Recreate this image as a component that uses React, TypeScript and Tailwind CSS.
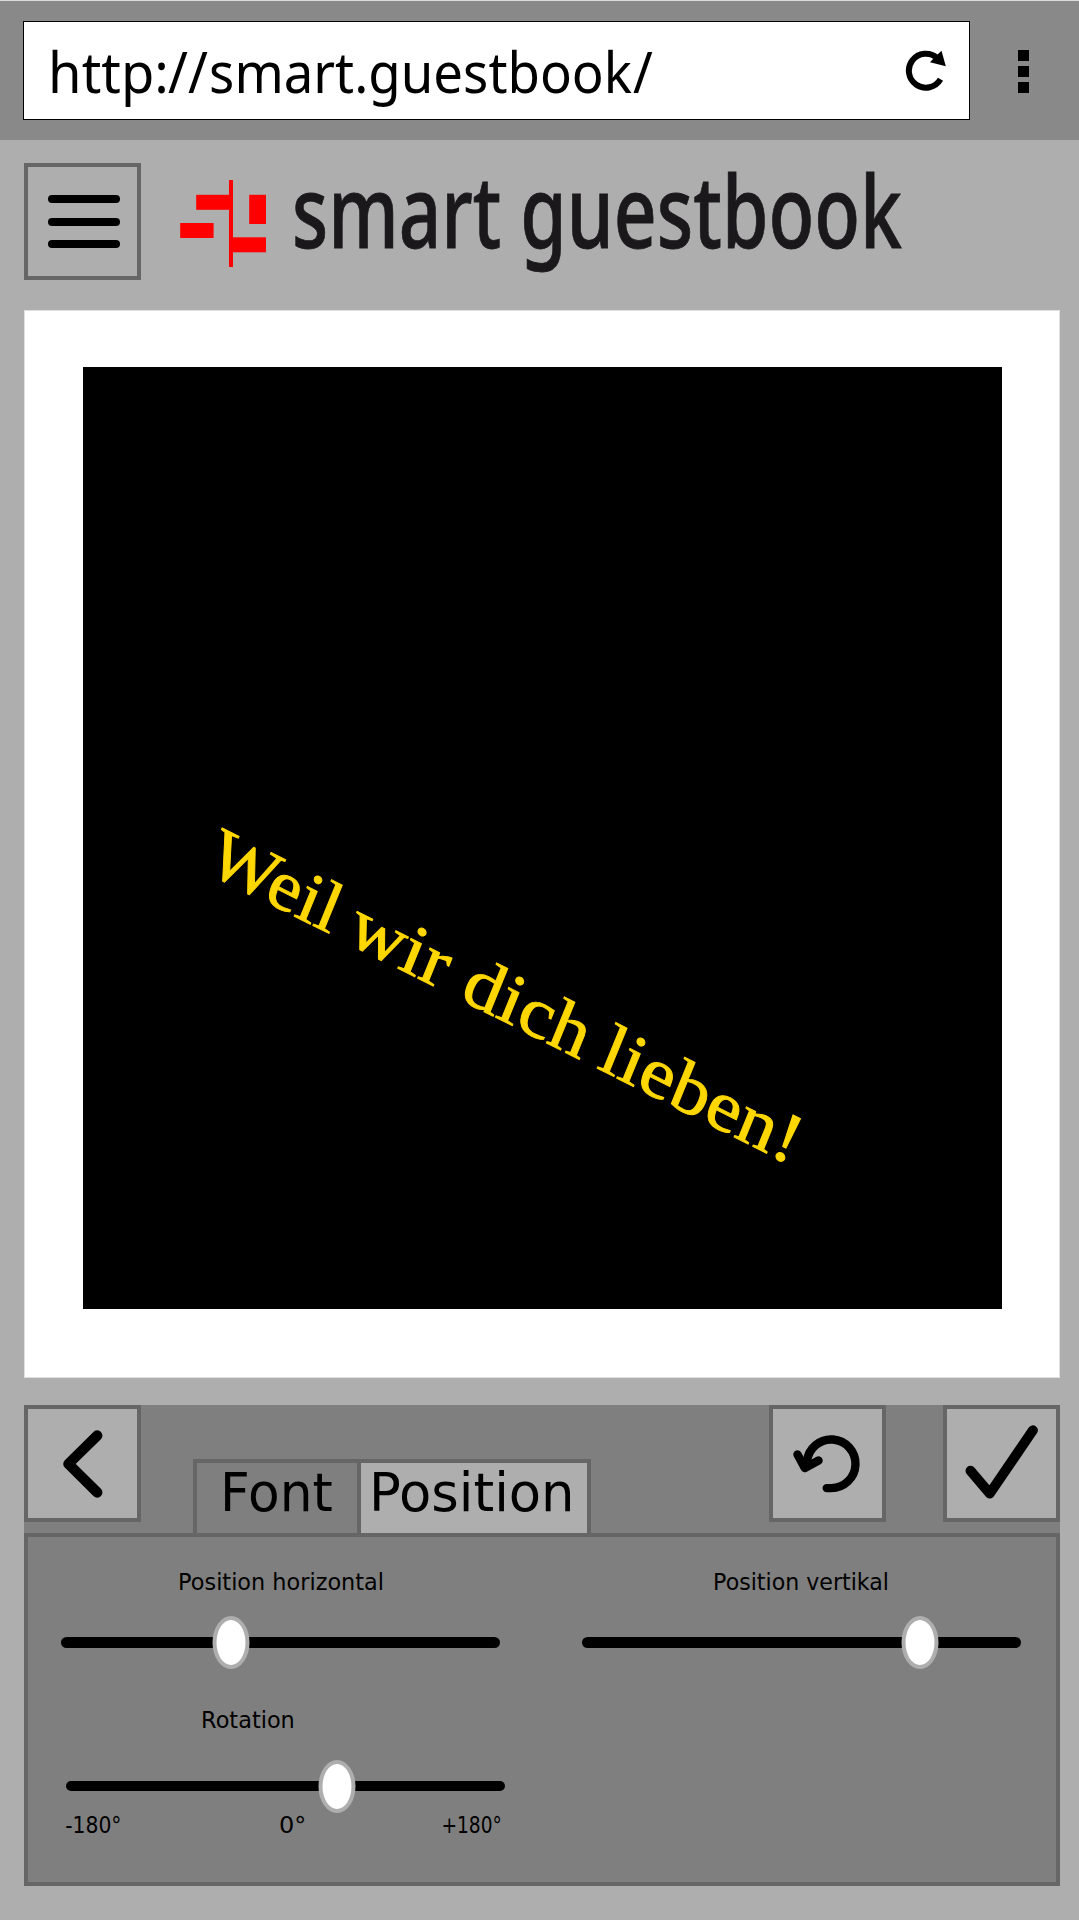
import { useLayoutEffect, useRef, useState } from "react";

type FitProps = { text: string; width: number; className?: string };

/* Text whose visible glyphs span exactly `width` pixels. */
function Fit({ text, width, className = "" }: FitProps) {
  const ref = useRef<HTMLSpanElement>(null);
  const [transform, setTransform] = useState("none");

  useLayoutEffect(() => {
    const ctx = document.createElement("canvas").getContext("2d");
    if (!ref.current || !ctx) return;
    const cs = getComputedStyle(ref.current);
    ctx.font = `${cs.fontWeight} ${cs.fontSize} ${cs.fontFamily}`;
    const m = ctx.measureText(text);
    const ink = m.actualBoundingBoxLeft + m.actualBoundingBoxRight;
    setTransform(`scaleX(${width / ink}) translateX(${m.actualBoundingBoxLeft}px)`);
  }, [text, width]);

  return (
    <span className={`block shrink-0 whitespace-nowrap ${className}`} style={{ width }}>
      <span ref={ref} className="inline-block origin-left" style={{ transform }}>
        {text}
      </span>
    </span>
  );
}

function Slider({ value }: { value: number }) {
  return (
    <div className="relative flex h-[53px] w-[439px] items-center">
      <div className="h-[10.5px] w-full rounded-full bg-black" />
      <div
        className="absolute top-0 h-[53px] w-[37px] -translate-x-1/2 rounded-[50%] border-4 border-[#aeaeae] bg-white"
        style={{ left: value }}
      />
    </div>
  );
}

const button = "flex h-[117px] w-[117px] shrink-0 items-center justify-center border-4 border-[#666] bg-[#aeaeae]";

export default function App() {
  return (
    <div className="flex h-[1920px] w-[1079px] flex-col overflow-hidden bg-[#aeaeae] text-black">
      <header className="flex h-[140px] shrink-0 border-t border-[#dcdcdc] bg-[#898989] pl-[23px] pt-5">
        <div className="flex h-[99px] w-[947px] items-center justify-between border border-black bg-white pl-7 pr-[22px]">
          <div className="flex font-['Noto_Sans',sans-serif] text-[56px] leading-[80px]">
            <Fit text="http:" width={113} />
            <Fit text="//" width={40} className="ml-[2.5px]" />
            <Fit text="smart.guestbook" width={421} className="ml-[3.5px]" />
            <Fit text="/" width={20} className="ml-[0.5px]" />
          </div>
          <svg width="42" height="42" viewBox="906 49 42 42" fill="none">
            <path d="M941.5 78.3 A17 17 0 1 1 938 56.8" stroke="#000" strokeWidth="6" />
            <path d="M942.5 49.8 L946.8 65.3 L931 61.2 L934.5 57.5 L938.5 53.5 Z" fill="#000" />
          </svg>
        </div>
        <div className="ml-12 mt-[29px] flex flex-col gap-[5.5px]">
          <i className="size-[10.5px] bg-black" />
          <i className="size-[10.5px] bg-black" />
          <i className="size-[10.5px] bg-black" />
        </div>
      </header>

      <div className="mt-[23px] flex h-[117px] shrink-0 items-center pl-6">
        <button className="flex h-[117px] w-[117px] flex-col items-center justify-center gap-[14.5px] border-4 border-[#666]">
          <i className="ml-[2px] h-2 w-[72px] rounded-full bg-black" />
          <i className="ml-[2px] h-2 w-[72px] rounded-full bg-black" />
          <i className="ml-[2px] h-2 w-[72px] rounded-full bg-black" />
        </button>
        <svg className="ml-[39px] mt-1" width="86" height="87" viewBox="180 180 86 87" fill="#f00">
          <rect x="229" y="180" width="4" height="87" />
          <rect x="196.2" y="194.8" width="33" height="15" />
          <rect x="249.2" y="194.8" width="16.8" height="29.2" />
          <rect x="180.2" y="223" width="33.4" height="15" />
          <rect x="233" y="237.3" width="33" height="15" />
        </svg>
        <h1 className="-mt-[25px] ml-[28.5px] flex gap-[25px] font-['Noto_Sans',sans-serif] text-[100px] font-medium leading-[100px] text-[#1a181b] [-webkit-text-stroke:0.8px_#1a181b]">
          <Fit text="smart" width={204.5} />
          <Fit text="guestbook" width={378} />
        </h1>
      </div>

      <main className="ml-6 mt-[30px] h-[1068px] w-[1036px] shrink-0 border border-[#dfdfdf] bg-white pl-[57.5px] pt-14">
        <div className="relative h-[942px] w-[919px] bg-black">
          <div className="absolute left-[121px] top-[440px] flex h-[80px] origin-[0_65px] rotate-[26.67deg] font-['Liberation_Serif',serif] text-[71px] leading-[80px] text-[#ffd700] [-webkit-text-stroke:0.9px_#ffd700]">
            <div className="flex origin-[0_65px] skew-x-[4.5deg]">
              <Fit text="Weil" width={140} />
              <Fit text="wir" width={107} className="ml-[17px]" />
              <Fit text="dich" width={133} className="ml-[23px]" />
              <Fit text="lieben!" width={209} className="ml-[19px]" />
            </div>
          </div>
        </div>
      </main>

      <section className="ml-6 mt-[27px] w-[1036px] shrink-0 bg-[#7f7f7f] font-['DejaVu_Sans',sans-serif]">
        <div className="flex h-32 items-start">
          <button className={button}>
            <svg className="-ml-[2px]" width="44" height="72" viewBox="60 1427.5 44 72" fill="none" stroke="#000" strokeWidth="10.3" strokeLinecap="round" strokeLinejoin="round">
              <path d="M97.3 1435 L68.4 1463.4 L97.3 1492" />
            </svg>
          </button>
          <div className="ml-[51.5px] mt-[54px] flex h-[74px] w-[398px] border-x-4 border-t-4 border-[#666] text-[53px] leading-[59px]">
            <div className="w-[164px] border-r-4 border-[#666] pl-7">
              <Fit text="Font" width={107} />
            </div>
            <div className="flex-1 bg-[#aeaeae] pl-[13px]">
              <Fit text="Position" width={197} />
            </div>
          </div>
          <button className={`${button} ml-auto`}>
            <svg width="70" height="70" viewBox="792.5 1428.5 70 70" fill="none" stroke="#000" strokeWidth="8.4" strokeLinecap="round" strokeLinejoin="round">
              <path d="M827.2 1487.6 H831.2 A24.3 24.3 0 1 0 807.5 1461" />
              <path d="M798 1454 L805.3 1467.5 L819 1460" />
            </svg>
          </button>
          <button className={`${button} ml-[57.5px]`}>
            <svg width="80" height="80" viewBox="961.5 1423.5 80 80" fill="none" stroke="#000" strokeWidth="10" strokeLinecap="round" strokeLinejoin="round">
              <path d="M970 1470.3 L989.3 1493 L1032.4 1429.8" />
            </svg>
          </button>
        </div>
        <div className="flex h-[353px] border-4 border-[#666] pl-[33px] pt-[33px] text-[23.5px] leading-[24px]">
          <div className="w-[521px]">
            <Fit text="Position horizontal" width={202.5} className="ml-[119px]" />
            <div className="mt-[22px]">
              <Slider value={170} />
            </div>
            <Fit text="Rotation" width={90} className="ml-[141.5px] mt-[39px]" />
            <div className="ml-[5px] mt-[27.5px] w-[440px]">
              <Slider value={271} />
              <div className="flex">
                <Fit text="-180°" width={54} />
                <Fit text="0°" width={24.5} className="ml-[159.5px]" />
                <Fit text="+180°" width={57.5} className="ml-[138.5px]" />
              </div>
            </div>
          </div>
          <div>
            <Fit text="Position vertikal" width={172.5} className="ml-[133px]" />
            <div className="mt-[22px]">
              <Slider value={337.5} />
            </div>
          </div>
        </div>
      </section>
    </div>
  );
}
